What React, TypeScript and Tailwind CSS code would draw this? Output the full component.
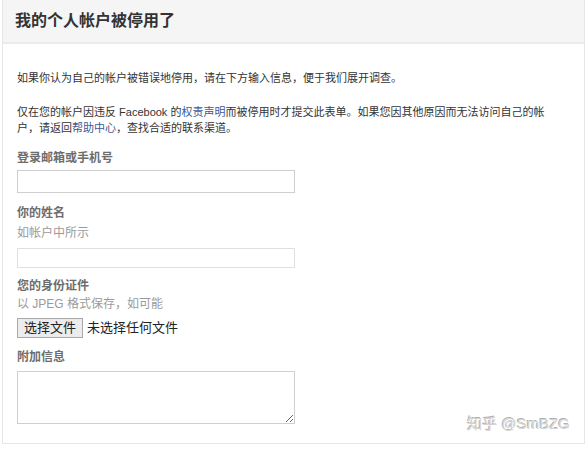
const font = { fontFamily: '"Liberation Sans", "Noto Sans CJK SC", sans-serif' };

const Label = ({ children }: { children: React.ReactNode }) => (
  <div className="text-[12px] font-bold leading-[16px] text-[#6d6d6d]">{children}</div>
);

const Hint = ({ children }: { children: React.ReactNode }) => (
  <div className="text-[12px] leading-[16px] text-[#9a9a9a]">{children}</div>
);

export default function App() {
  return (
    <div className="h-[449px] w-[587px] bg-white pl-[2px] pr-[2px]" style={font}>
      <div className="relative h-[444px] border-x border-b border-[#e6e6e6] bg-white">
        <div className="flex h-[44px] items-center border-b-2 border-[#ebebeb] bg-[#f5f5f5] pl-[12px]">
          <h1 className="text-[16px] font-bold text-[#333]">我的个人帐户被停用了</h1>
        </div>

        <div className="px-[14px] pt-[26px] text-[11px] leading-[16px] text-[#333]">
          <p>如果你认为自己的帐户被错误地停用，请在下方输入信息，便于我们展开调查。</p>
          <p className="mt-[18px] whitespace-nowrap">
            仅在您的帐户因违反 Facebook 的
            <span className="text-[#3b5998]">权责声明</span>
            而被停用时才提交此表单。如果您因其他原因而无法访问自己的帐
            <br />
            户，请返回<span className="text-[#3b5998]">帮助中心</span>，查找合适的联系渠道。
          </p>

          <div className="mt-[14px]">
            <Label>登录邮箱或手机号</Label>
            <input className="mt-[4px] block h-[23px] w-[278px] border border-[#cfcfcf] bg-white" />
          </div>

          <div className="mt-[12px]">
            <Label>你的姓名</Label>
            <div className="mt-[4px]">
              <Hint>如帐户中所示</Hint>
            </div>
            <input className="mt-[7px] block h-[20px] w-[278px] border border-[#e0e0e0] bg-white" />
          </div>

          <div className="mt-[10px]">
            <Label>您的身份证件</Label>
            <div className="mt-[2px]">
              <Hint>以 JPEG 格式保存，如可能</Hint>
            </div>
            <div className="mt-[6px] flex items-center gap-[4px] text-[13px] text-[#222]">
              <span className="flex h-[20px] items-center border border-[#a9a9a9] bg-[#ececec] px-[6px]">选择文件</span>
              <span>未选择任何文件</span>
            </div>
          </div>

          <div className="mt-[11px]">
            <Label>附加信息</Label>
            <textarea className="mt-[6px] block h-[53px] w-[278px] resize border border-[#cfcfcf] bg-white" />
          </div>
        </div>

        <div
          className="absolute bottom-[8px] right-[14px] text-[15px] text-[#d4d4d4]"
          style={{ textShadow: '1px 1px 0 #fff, -1px -1px 0 #b0b0b0' }}
        >
          知乎 @SmBZG
        </div>
      </div>
    </div>
  );
}
